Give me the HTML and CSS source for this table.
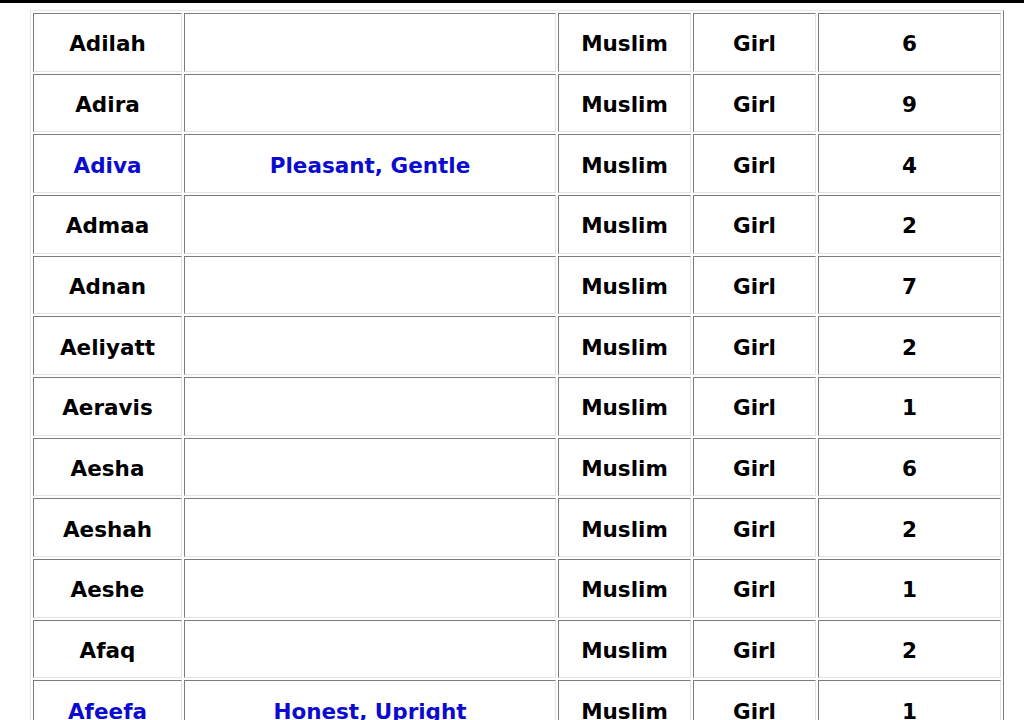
FILE: index.html
```html
<!DOCTYPE html>
<html>
<head>
<meta charset="utf-8">
<link rel="stylesheet" href="styles.css">
</head>
<body>
<div class="topbar"></div>
<table class="names">
<tbody>
<tr><td class="c1">Adilah</td><td class="c2">&nbsp;</td><td class="c3">Muslim</td><td class="c4">Girl</td><td class="c5">6</td></tr>
<tr><td>Adira</td><td>&nbsp;</td><td>Muslim</td><td>Girl</td><td>9</td></tr>
<tr><td class="link">Adiva</td><td class="link">Pleasant, Gentle</td><td>Muslim</td><td>Girl</td><td>4</td></tr>
<tr><td>Admaa</td><td>&nbsp;</td><td>Muslim</td><td>Girl</td><td>2</td></tr>
<tr><td>Adnan</td><td>&nbsp;</td><td>Muslim</td><td>Girl</td><td>7</td></tr>
<tr><td>Aeliyatt</td><td>&nbsp;</td><td>Muslim</td><td>Girl</td><td>2</td></tr>
<tr><td>Aeravis</td><td>&nbsp;</td><td>Muslim</td><td>Girl</td><td>1</td></tr>
<tr><td>Aesha</td><td>&nbsp;</td><td>Muslim</td><td>Girl</td><td>6</td></tr>
<tr><td>Aeshah</td><td>&nbsp;</td><td>Muslim</td><td>Girl</td><td>2</td></tr>
<tr><td>Aeshe</td><td>&nbsp;</td><td>Muslim</td><td>Girl</td><td>1</td></tr>
<tr><td>Afaq</td><td>&nbsp;</td><td>Muslim</td><td>Girl</td><td>2</td></tr>
<tr><td class="link">Afeefa</td><td class="link">Honest, Upright</td><td>Muslim</td><td>Girl</td><td>1</td></tr>
</tbody>
</table>
</body>
</html>
```
FILE: styles.css
```css
html, body {
  margin: 0;
  padding: 0;
  background: #ffffff;
}
body {
  font-family: "DejaVu Sans", Verdana, sans-serif;
  overflow: hidden;
}
.topbar {
  height: 3px;
  background: #000000;
}
.names {
  margin: 7px 0 0 30px;
  width: 974px;
  table-layout: fixed;
  border-collapse: separate;
  border-spacing: 2px;
  border: 1px solid;
  border-color: #e6e6e6 #7c7c7c #7c7c7c #e6e6e6;
}
.names td {
  box-sizing: border-box;
  height: 58.67px;
  padding: 3px 0 0 0;
  border: 1px solid;
  border-color: #7c7c7c #e2e2e2 #e2e2e2 #7c7c7c;
  text-align: center;
  vertical-align: middle;
  font-weight: bold;
  font-size: 21.5px;
  color: #000000;
  background: #ffffff;
}
.names td.c1 { width: 149px; }
.names td.c2 { width: 372px; }
.names td.c3 { width: 133px; }
.names td.c4 { width: 123px; }
.names td.c5 { width: 183px; }
.names td.link {
  color: #0b0bd0;
}
```
